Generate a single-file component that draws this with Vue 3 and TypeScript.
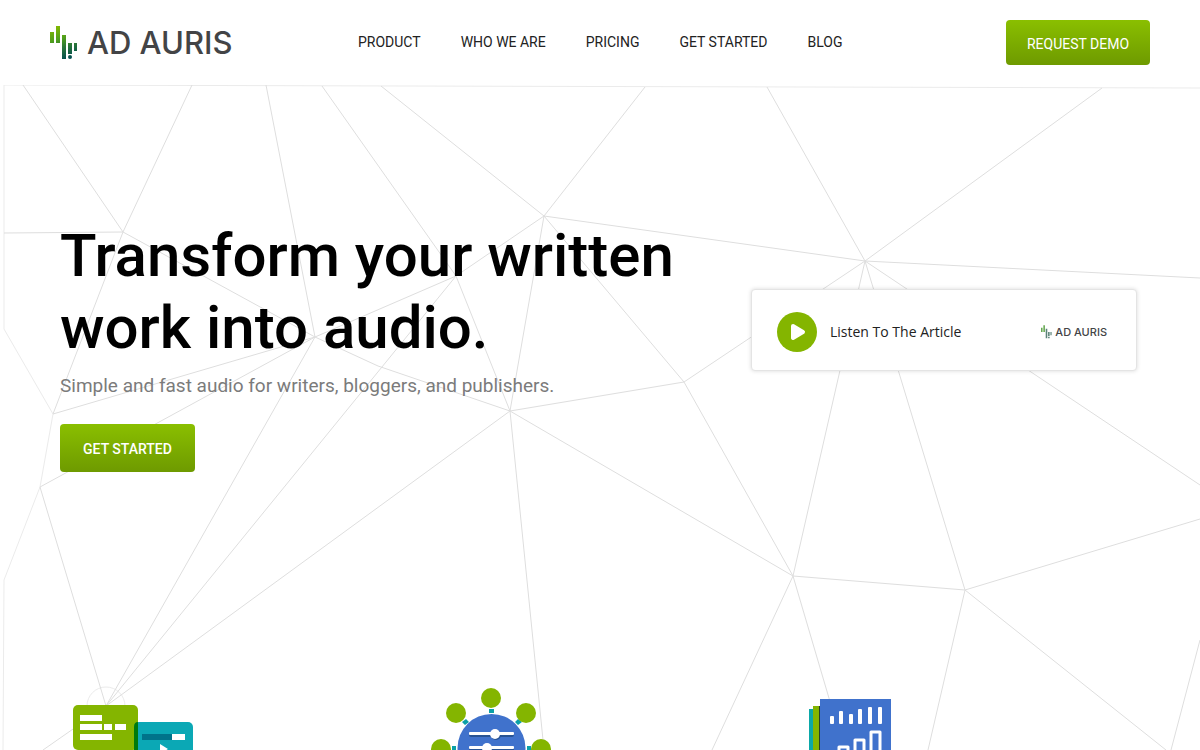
<script setup lang="ts">
interface NavItem {
  label: string
  href: string
}

const navItems: NavItem[] = [
  { label: 'PRODUCT', href: '#product' },
  { label: 'WHO WE ARE', href: '#about' },
  { label: 'PRICING', href: '#pricing' },
  { label: 'GET STARTED', href: '#start' },
  { label: 'BLOG', href: '#blog' },
]

// Strong segments of the web behind the hero
const meshLines: string[] = [
  '23,0 123,147', '192,0 123,147', '4,148 123,147', '123,147 315,252',
  '123,147 53,329', '266,0 315,252', '315,252 456,191', '315,252 53,329',
  '315,252 40,402', '315,252 106,621', '315,252 378,281 510,326',
  '456,191 106,621', '456,191 544,131', '322,1 456,191', '456,191 510,326',
  '381,1 544,131', '645,2 544,131', '544,131 865,176', '544,131 510,326',
  '544,131 684,297', '684,297 510,326', '684,297 793,491', '684,297 865,176',
  '510,326 793,491', '510,326 544,665', '510,326 106,621', '865,176 767,2',
  '865,176 1102,3', '865,176 1200,193', '865,176 793,491', '865,176 965,505',
  '865,176 1200,400', '793,491 965,505', '793,491 712,665', '793,491 831,620',
  '965,505 1200,434', '965,505 1166,665', '965,505 928,665', '1200,555 1171,665',
  '40,402 106,621', '106,621 43,665',
]

// Fainter outline along the edges
const edgeLines: string[] = [
  '1200,3 4,0 4,244 53,329 40,402 4,495 3,665',
]
</script>

<template>
  <div class="page">
    <header class="header">
      <a class="brand" href="#home" aria-label="Ad Auris">
        <svg class="brand-mark" viewBox="0 0 28 34" aria-hidden="true">
          <defs>
            <linearGradient id="markFill" gradientUnits="userSpaceOnUse" x1="4" y1="0" x2="14" y2="34">
              <stop offset="0" stop-color="#86ba00" />
              <stop offset="0.4" stop-color="#4f9e1c" />
              <stop offset="0.65" stop-color="#2a7638" />
              <stop offset="1" stop-color="#004c50" />
            </linearGradient>
          </defs>
          <path fill="url(#markFill)" d="M0 6h4v11H0zM6 0h4v17H6zM12 9h4v24h-4zM18 17h4v11h-4zM24 17h3v8h-3z" />
          <circle cx="20" cy="31" r="2" fill="url(#markFill)" />
        </svg>
        <span class="brand-name">AD AURIS</span>
      </a>
      <nav class="nav" aria-label="Main">
        <a v-for="item in navItems" :key="item.label" :href="item.href">{{ item.label }}</a>
      </nav>
      <button class="button demo" type="button">REQUEST DEMO</button>
    </header>

    <main class="main">
      <svg class="mesh" viewBox="0 0 1200 665" preserveAspectRatio="xMidYMin slice" aria-hidden="true">
        <polyline v-for="line in edgeLines" :key="line" :points="line" class="edge" />
        <circle cx="106" cy="621" r="19" class="edge" />
        <polyline v-for="line in meshLines" :key="line" :points="line" class="strand" />
      </svg>

      <section class="hero">
        <div class="copy">
          <h1>Transform your written work into audio.</h1>
          <p>Simple and fast audio for writers, bloggers, and publishers.</p>
          <button class="button start" type="button">GET STARTED</button>
        </div>
        <div class="player">
          <button class="play" type="button" aria-label="Play">
            <svg viewBox="0 0 40 40" aria-hidden="true">
              <path d="M16 14L26 20L16 26Z" fill="#fff" stroke="#fff" stroke-width="4" stroke-linejoin="round" />
            </svg>
          </button>
          <span class="player-title">Listen To The Article</span>
          <span class="player-brand">
            <svg viewBox="0 0 28 34" aria-hidden="true">
              <path fill="#67a852" d="M0 6h4v11H0zM6 0h4v17H6z" />
              <path fill="#5b8378" d="M12 9h4v24h-4zM18 17h4v11h-4zM18 30h4v3h-4zM24 17h3v8h-3z" />
            </svg>
            <span>AD AURIS</span>
          </span>
        </div>
      </section>

      <section class="features">
        <div class="feature">
          <svg viewBox="0 0 140 120" aria-hidden="true">
            <rect x="13" y="25" width="65" height="45" rx="5" fill="#84b500" />
            <path d="M20 35h22v6H20zM20 44h22v6H20zM44 44h8v6h-8zM55 44h11v6H55zM20 54h32v6H20z" fill="#fff" />
            <rect x="74" y="42" width="59" height="50" rx="5" fill="#0ba8b5" />
            <path d="M74 47q0-5 4-5v28h-4z" fill="#007a0c" />
            <path d="M82 54h30v6H82z" fill="#00738a" />
            <path d="M112 54h13v6h-13zM100 64l8 5-8 5z" fill="#fff" />
          </svg>
        </div>
        <div class="feature">
          <svg viewBox="0 0 140 120" aria-hidden="true">
            <path d="M69 29h5v4h-5z" fill="#0ba0a8" />
            <path d="M42 42l4-3 3 3-4 3zM95 42l3-3 4 3-4 3zM32 66h4v6h-4zM107 66h4v6h-4z" fill="#0ba0a8" />
            <circle cx="71.500" cy="68" r="34" fill="#4072cc" />
            <g fill="#84b500">
              <circle cx="71" cy="18" r="10" /><circle cx="36" cy="33" r="10" />
              <circle cx="106" cy="33" r="10" /><circle cx="21" cy="69" r="10" />
              <circle cx="121" cy="69" r="10" />
            </g>
            <g fill="#285394">
              <rect x="49" y="53" width="45" height="4" rx="2" /><rect x="49" y="67" width="45" height="4" rx="2" />
              <circle cx="76" cy="55" r="5" /><circle cx="67" cy="69" r="5" />
            </g>
            <g fill="#fff">
              <rect x="49" y="52" width="45" height="3" rx="1" /><rect x="49" y="66" width="45" height="3" rx="1" />
              <circle cx="75" cy="54" r="5" /><circle cx="67" cy="68" r="5" />
            </g>
          </svg>
        </div>
        <div class="feature">
          <svg viewBox="0 0 140 120" aria-hidden="true">
            <path d="M29 29h5v70h-5z" fill="#0ba8a8" />
            <path d="M33 26h8v70h-8z" fill="#84b500" />
            <path d="M39 26h2v70h-2z" fill="#263f2c" />
            <path d="M40 19h71v90H40z" fill="#4072cc" />
            <g fill="#fff">
              <rect x="50" y="36" width="4" height="8" rx="1" /><rect x="59" y="31" width="4" height="13" rx="1" />
              <rect x="69" y="34" width="4" height="10" rx="1" /><rect x="78" y="29" width="4" height="15" rx="1" />
              <rect x="88" y="27" width="4" height="17" rx="1" /><rect x="98" y="27" width="4" height="17" rx="1" />
            </g>
            <path d="M59 90V67h9v23M75 90V60h9v30M91 90V52h9v38" fill="none" stroke="#fff" stroke-width="3" stroke-linejoin="round" />
          </svg>
        </div>
      </section>
    </main>
  </div>
</template>

<style>
body {
  margin: 0;
  background: #fff;
}
</style>

<style scoped>
.page {
  display: flex;
  flex-direction: column;
  height: 100vh;
  overflow: hidden;
  background: #fff;
  font-family: Roboto, "Liberation Sans", sans-serif;
}

.header {
  display: grid;
  grid-template-columns: 308px 1fr auto;
  align-items: center;
  flex: none;
  height: 85px;
  box-sizing: border-box;
  padding: 0 50px;
}

.brand {
  display: flex;
  align-items: center;
  gap: 9px;
  color: #434446;
  text-decoration: none;
}

.brand-mark {
  width: 28px;
  height: 34px;
}

.brand-name {
  font: 500 31px/40px Inter, sans-serif;
}

.nav {
  display: flex;
  gap: 40px;
  padding-bottom: 2px;
}

.nav a {
  color: #222;
  font-size: 14px;
  line-height: 20px;
  text-decoration: none;
  white-space: nowrap;
}

.button {
  border: 0;
  border-radius: 4px;
  background: linear-gradient(#8abf00, #6e9a00);
  color: #fff;
  font-family: inherit;
  font-size: 14px;
  cursor: pointer;
}

.demo {
  width: 144px;
  height: 45px;
  padding: 3px 0 0;
}

.main {
  position: relative;
  flex: 1;
  min-height: 0;
}

.mesh {
  position: absolute;
  inset: 0;
  width: 100%;
  height: 100%;
}

.strand,
.edge {
  fill: none;
  stroke: #dedede;
  stroke-width: 1;
}

.edge {
  stroke: #ebebeb;
}

.hero {
  position: relative;
  display: grid;
  grid-template-columns: 1fr 386px;
  column-gap: 50px;
  padding: 135px 63px 0 60px;
}

h1 {
  max-width: 640px;
  margin: 0;
  color: #000;
  font-size: 60px;
  font-weight: 500;
  line-height: 72px;
}

.copy p {
  margin: 10px 0 0;
  color: #7b7b7b;
  font-size: 19px;
  line-height: 24px;
}

.start {
  width: 135px;
  height: 48px;
  margin-top: 26px;
  padding: 2px 0 0;
  font-weight: 500;
}

.player {
  display: flex;
  align-items: center;
  height: 82px;
  box-sizing: border-box;
  margin-top: 69px;
  padding: 3px 29px 0 25px;
  border: 1px solid #e4e4e4;
  border-radius: 4px;
  background: #fff;
  box-shadow: 0 0 4px rgba(0, 0, 0, 0.15);
}

.play {
  width: 40px;
  height: 40px;
  padding: 0;
  border: 0;
  border-radius: 50%;
  background: #84b500;
  cursor: pointer;
}

.play svg {
  display: block;
}

.player-title {
  margin-left: 13px;
  color: #222;
  font: 14px/20px "Open Sans", "Noto Sans", sans-serif;
}

.player-brand {
  display: flex;
  align-items: center;
  gap: 3px;
  margin-left: auto;
  color: #434446;
  font: 500 11px/16px Inter, sans-serif;
}

.player-brand svg {
  width: 11px;
  height: 14px;
}

.features {
  position: relative;
  display: grid;
  grid-template-columns: repeat(3, 1fr);
  margin-top: 208px;
  padding: 0 60px;
}

.feature svg {
  display: block;
  width: 140px;
  height: 120px;
}
</style>
